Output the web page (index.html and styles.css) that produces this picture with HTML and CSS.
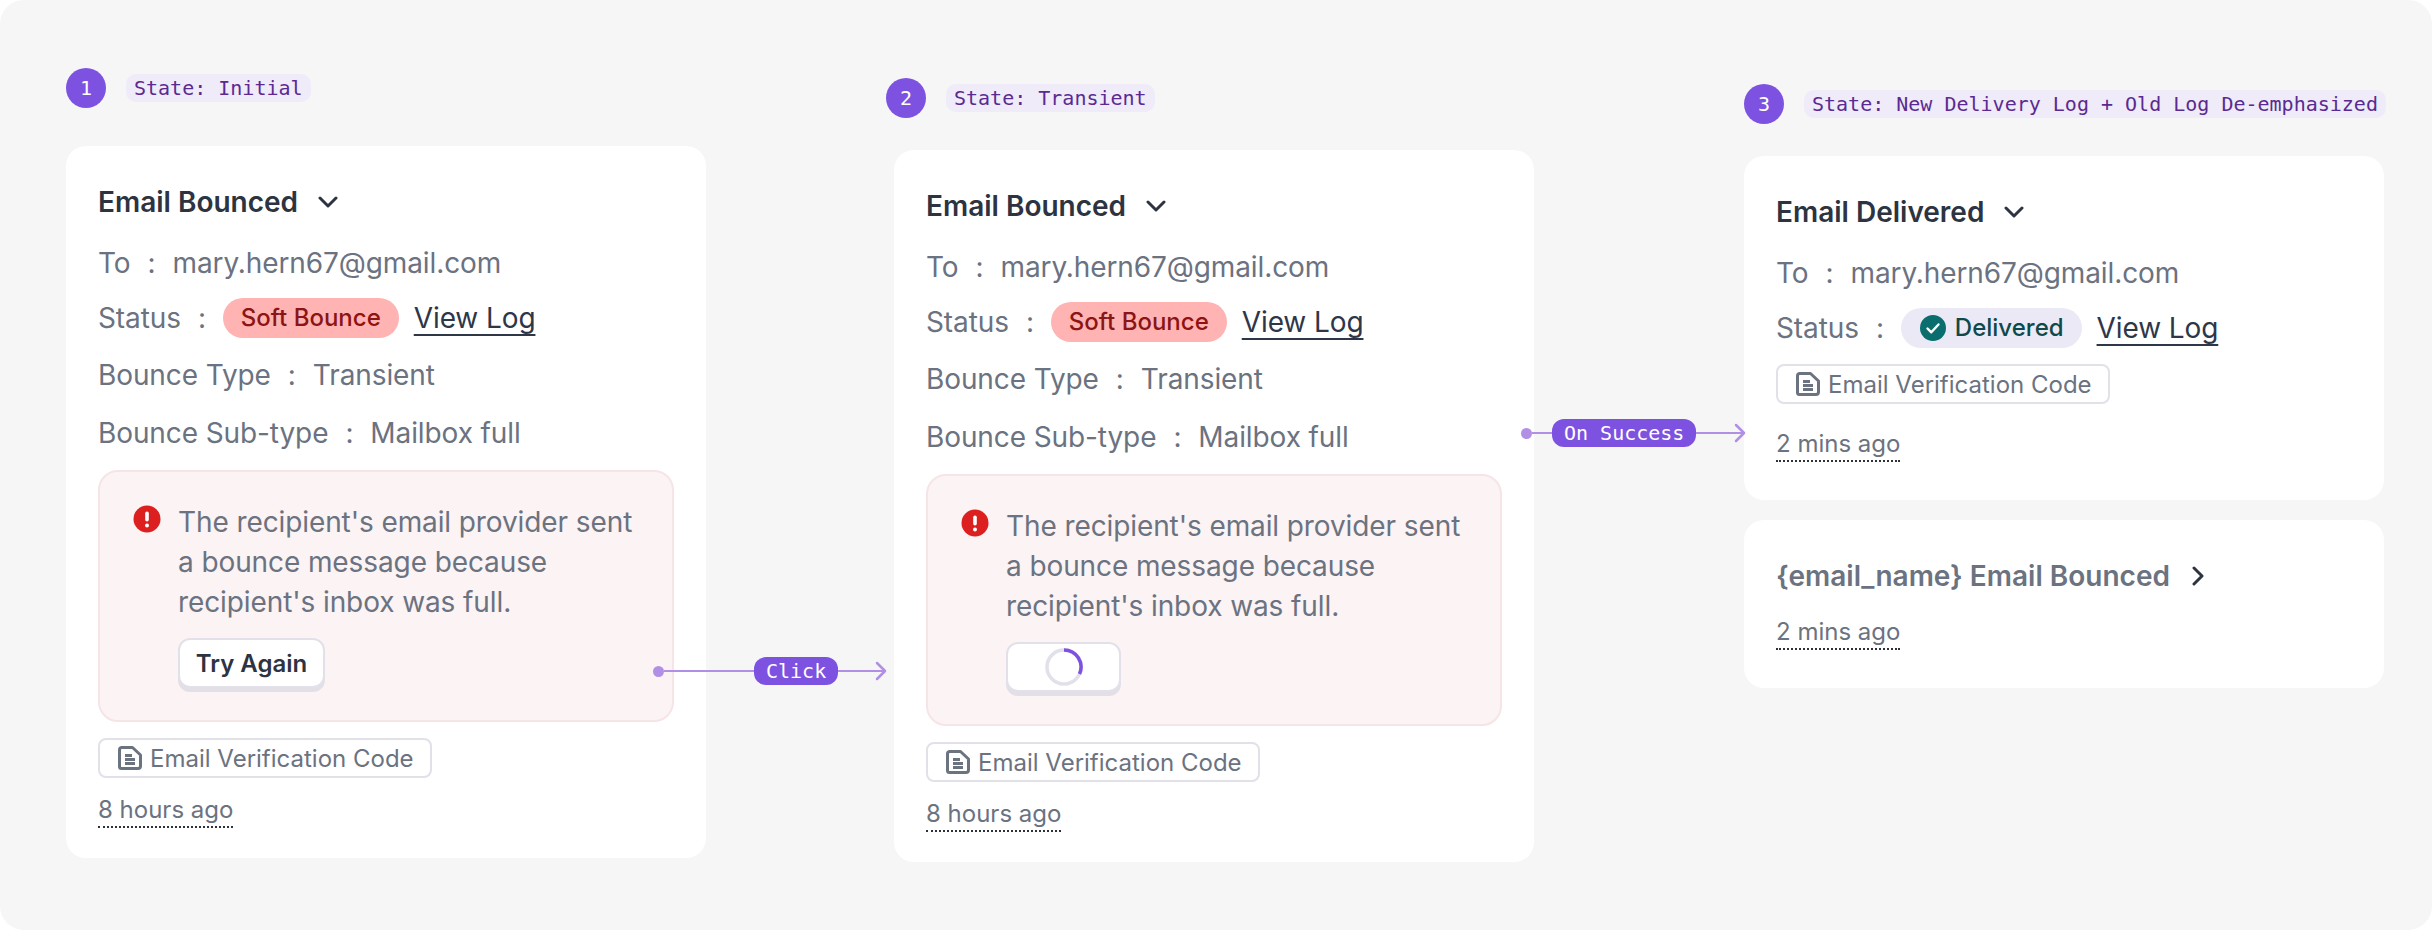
FILE: index.html
```html
<!DOCTYPE html>
<html lang="en">
<head>
    <meta charset="UTF-8">
    <title>Email bounce states</title>
    <link rel="stylesheet" href="styles.css">
</head>
<body>

<div class="canvas">

    <!-- State 1 -->
    <section class="state state-initial">
        <div class="state-head">
            <span class="step">1</span>
            <span class="state-tag">State: Initial</span>
        </div>
        <div class="card card-tall">
            <h3 class="card-title">Email Bounced
                <svg class="chevron" width="20" height="12" viewBox="0 0 20 12"><path d="M2 2l8 8 8-8"/></svg>
            </h3>
            <div class="row"><span>To</span><span>:</span><span>mary.hern67@gmail.com</span></div>
            <div class="row"><span>Status</span><span>:</span><span class="badge badge-red">Soft Bounce</span><a class="log-link">View Log</a></div>
            <div class="row"><span>Bounce Type</span><span>:</span><span>Transient</span></div>
            <div class="row"><span>Bounce Sub-type</span><span>:</span><span>Mailbox full</span></div>
            <div class="alert">
                <svg class="alert-icon" width="28" height="28" viewBox="0 0 28 28"><circle cx="14" cy="14" r="13.5" fill="#dc1f1f"/><rect x="12.2" y="6.5" width="3.6" height="10" rx="1.8" fill="#fff"/><circle cx="14" cy="20.4" r="2" fill="#fff"/></svg>
                <div>
                    <p>The recipient's email provider sent a bounce message because recipient's inbox was full.</p>
                    <button class="btn">Try Again</button>
                </div>
            </div>
            <div class="attachment">
                <svg class="doc" width="24" height="24" viewBox="0 0 24 24"><path d="M3.500 1.500h11l8 7.500v11a2.500 2.500 0 0 1-2.500 2.500h-16.500a2 2 0 0 1-2-2v-16.500a2.500 2.500 0 0 1 2-2.500zM7 9.500h7M7 13.500h10M7 17.500h10"/></svg>
                Email Verification Code
            </div>
            <div class="time-line"><span class="time">8 hours ago</span></div>
        </div>
    </section>

    <!-- State 2 -->
    <section class="state state-transient">
        <div class="state-head">
            <span class="step">2</span>
            <span class="state-tag">State: Transient</span>
        </div>
        <div class="card card-tall">
            <h3 class="card-title">Email Bounced
                <svg class="chevron" width="20" height="12" viewBox="0 0 20 12"><path d="M2 2l8 8 8-8"/></svg>
            </h3>
            <div class="row"><span>To</span><span>:</span><span>mary.hern67@gmail.com</span></div>
            <div class="row"><span>Status</span><span>:</span><span class="badge badge-red">Soft Bounce</span><a class="log-link">View Log</a></div>
            <div class="row"><span>Bounce Type</span><span>:</span><span>Transient</span></div>
            <div class="row"><span>Bounce Sub-type</span><span>:</span><span>Mailbox full</span></div>
            <div class="alert">
                <svg class="alert-icon" width="28" height="28" viewBox="0 0 28 28"><circle cx="14" cy="14" r="13.5" fill="#dc1f1f"/><rect x="12.2" y="6.5" width="3.6" height="10" rx="1.8" fill="#fff"/><circle cx="14" cy="20.4" r="2" fill="#fff"/></svg>
                <div>
                    <p>The recipient's email provider sent a bounce message because recipient's inbox was full.</p>
                    <button class="btn btn-loading">
                        <svg width="38" height="38" viewBox="0 0 38 38"><circle class="spin-track" cx="19" cy="19" r="17"/><path class="spin-arc" d="M19 2a17 17 0 0 1 15.500 24"/></svg>
                    </button>
                </div>
            </div>
            <div class="attachment">
                <svg class="doc" width="24" height="24" viewBox="0 0 24 24"><path d="M3.500 1.500h11l8 7.500v11a2.500 2.500 0 0 1-2.500 2.500h-16.500a2 2 0 0 1-2-2v-16.500a2.500 2.500 0 0 1 2-2.500zM7 9.500h7M7 13.500h10M7 17.500h10"/></svg>
                Email Verification Code
            </div>
            <div class="time-line"><span class="time">8 hours ago</span></div>
        </div>
    </section>

    <!-- State 3 -->
    <section class="state state-delivered">
        <div class="state-head">
            <span class="step">3</span>
            <span class="state-tag">State: New Delivery Log + Old Log De-emphasized</span>
        </div>
        <div class="card">
            <h3 class="card-title">Email Delivered
                <svg class="chevron" width="20" height="12" viewBox="0 0 20 12"><path d="M2 2l8 8 8-8"/></svg>
            </h3>
            <div class="row"><span>To</span><span>:</span><span>mary.hern67@gmail.com</span></div>
            <div class="row"><span>Status</span><span>:</span>
                <span class="badge badge-green">
                    <svg width="26" height="26" viewBox="0 0 26 26"><circle cx="13" cy="13" r="13" fill="#0b6e6e"/><path d="M7.500 13.500l3.800 3.800 7.200-7.800" fill="none" stroke="#fff" stroke-width="2.400" stroke-linecap="round" stroke-linejoin="round"/></svg>
                    Delivered
                </span>
                <a class="log-link">View Log</a>
            </div>
            <div class="attachment attachment-tight">
                <svg class="doc" width="24" height="24" viewBox="0 0 24 24"><path d="M3.500 1.500h11l8 7.500v11a2.500 2.500 0 0 1-2.500 2.500h-16.500a2 2 0 0 1-2-2v-16.500a2.500 2.500 0 0 1 2-2.500zM7 9.500h7M7 13.500h10M7 17.500h10"/></svg>
                Email Verification Code
            </div>
            <div class="time-line time-wrap"><span class="time">2 mins ago</span></div>
        </div>
        <div class="card card-old">
            <h3 class="card-title card-title-muted">{email_name} Email Bounced
                <svg class="chevron-right" width="12" height="20" viewBox="0 0 12 20"><path d="M2 2l8 8-8 8"/></svg>
            </h3>
            <div class="time-line time-old"><span class="time">2 mins ago</span></div>
        </div>
    </section>

    <!-- Стрелки между состояниями -->
    <div class="connector connector-click">
        <span class="dot"></span>
        <span class="line line-a"></span>
        <span class="pill">Click</span>
        <span class="line line-b"></span>
        <svg class="head" width="12" height="20" viewBox="0 0 12 20"><path d="M2 2l8 8-8 8"/></svg>
    </div>
    <div class="connector connector-success">
        <span class="dot"></span>
        <span class="line line-c"></span>
        <span class="pill">On Success</span>
        <span class="line line-d"></span>
        <svg class="head" width="12" height="20" viewBox="0 0 12 20"><path d="M2 2l8 8-8 8"/></svg>
    </div>

</div>

</body>
</html>
```

FILE: styles.css
```css
/* Общие стили */
html, body {
    margin: 0;
    padding: 0;
    background-color: #fff;
}

body {
    font-family: 'Inter', 'Liberation Sans', sans-serif;
    color: #6b7280;
    font-size: 28px;
}

.canvas {
    position: relative;
    box-sizing: border-box;
    width: 2432px;
    height: 930px;
    padding-left: 66px;
    display: flex;
    align-items: flex-start;
    background-color: #f6f6f6;
    border-radius: 24px;
    overflow: hidden;
}

/* Колонки */
.state {
    width: 640px;
    flex: none;
}

.state-initial {
    margin-top: 68px;
}

.state-transient {
    margin-top: 78px;
    margin-left: 188px;
}

.state-delivered {
    margin-top: 84px;
    margin-left: 210px;
}

.state-head {
    display: flex;
    align-items: center;
    gap: 20px;
    height: 40px;
    margin-bottom: 32px;
    white-space: nowrap;
}

.state-initial .state-head {
    margin-bottom: 38px;
}

.state-transient .state-head {
    margin-left: -8px;
}

.step {
    width: 40px;
    height: 40px;
    flex: none;
    border-radius: 50%;
    background-color: #7e52e0;
    color: #fff;
    font-family: 'DejaVu Sans Mono', monospace;
    font-size: 20px;
    line-height: 40px;
    text-align: center;
}

.state-tag {
    padding: 0 8px;
    height: 28px;
    line-height: 28px;
    border-radius: 10px;
    background-color: #efebf9;
    color: #5b2a91;
    font-family: 'DejaVu Sans Mono', monospace;
    font-size: 20px;
}

/* Карточки */
.card {
    box-sizing: border-box;
    background-color: #fff;
    border-radius: 20px;
    padding: 39px 32px 38px;
}

.card-tall {
    padding-bottom: 30px;
}

.card-old {
    margin-top: 20px;
    padding-bottom: 38px;
}

.card-title {
    display: flex;
    align-items: center;
    gap: 19.5px;
    margin: 0 0 24px;
    height: 34px;
    font-size: 28px;
    font-weight: 600;
    color: #2d3340;
}

.card-title-muted {
    color: #6b7280;
    gap: 22px;
    margin-bottom: 23px;
}

.chevron, .chevron-right {
    fill: none;
    stroke: #2d3340;
    stroke-width: 3;
    stroke-linecap: round;
    stroke-linejoin: round;
}

.row {
    display: flex;
    align-items: center;
    gap: 17px;
    height: 40px;
    line-height: 40px;
    margin-bottom: 17px;
    letter-spacing: -0.1px;
    white-space: nowrap;
}

.row:first-of-type {
    margin-bottom: 15px;
}

.row:nth-child(4) {
    margin-bottom: 18px;
}

.badge {
    display: flex;
    align-items: center;
    height: 40px;
    border-radius: 20px;
    font-size: 24px;
    font-weight: 500;
    letter-spacing: 0;
}

.badge-red {
    padding: 0 18px;
    background-color: #ffb3b3;
    color: #8b1414;
}

.badge-green {
    gap: 9px;
    padding: 0 18px 0 19px;
    background-color: #ece9f6;
    color: #0f4a4a;
}

.log-link {
    color: #2d3748;
    margin-left: -2px;
    text-decoration: underline;
    text-decoration-thickness: 2px;
    text-underline-offset: 6px;
}

/* Блок ошибки */
.alert {
    display: flex;
    gap: 17px;
    box-sizing: border-box;
    height: 252px;
    width: 576px;
    padding: 30px 32px 0 33px;
    border: 2px solid #f6e4e7;
    border-radius: 20px;
    background-color: #fcf3f4;
}

.alert-icon {
    flex: none;
    margin-top: 3px;
}

.alert p {
    margin: 0;
    line-height: 40px;
    letter-spacing: -0.1px;
}

.btn {
    display: flex;
    align-items: center;
    justify-content: center;
    box-sizing: border-box;
    width: 147px;
    height: 50px;
    margin-top: 16px;
    padding: 0;
    border: 2px solid #e2e0e9;
    border-radius: 12px;
    background-color: #fff;
    box-shadow: 0 4px 0 #e3dfe6;
    color: #2d3340;
    font-family: inherit;
    font-size: 24px;
    font-weight: 600;
}

.btn-loading {
    width: 115px;
}

.spin-track {
    fill: none;
    stroke: #e2e0e9;
    stroke-width: 3.5;
}

.spin-arc {
    fill: none;
    stroke: #7e52e0;
    stroke-width: 3.5;
}

/* Вложение и время */
.attachment {
    display: inline-flex;
    align-items: center;
    gap: 8px;
    box-sizing: border-box;
    height: 40px;
    margin-top: 16px;
    padding: 0 16px 0 18px;
    border: 2px solid #e2e0e9;
    border-radius: 8px;
    font-size: 24px;
    white-space: nowrap;
}

.attachment-tight {
    margin-top: -1px;
}

.doc {
    fill: none;
    stroke: #6b7280;
    stroke-width: 3;
    stroke-linejoin: round;
}

.time-line {
    display: flex;
}

.time {
    font-size: 24px;
    line-height: 32px;
    border-bottom: 2px dotted #2d3139;
    margin-top: 16px;
}

.time-wrap .time {
    margin-top: 24px;
}

.time-old .time {
    margin-top: 0;
}

/* Стрелки */
.connector {
    position: absolute;
    display: flex;
    align-items: center;
    height: 28px;
}

.connector-click {
    left: 653px;
    top: 657px;
}

.connector-success {
    left: 1521px;
    top: 419px;
}

.dot {
    width: 11px;
    height: 11px;
    border-radius: 50%;
    background-color: #b18fe4;
    flex: none;
}

.line {
    height: 2px;
    background-color: #b18fe4;
    flex: none;
}

.line-a { width: 90px; }
.line-b { width: 47px; }
.line-c { width: 20px; }
.line-d { width: 48px; }

.pill {
    padding: 0 12px;
    height: 28px;
    line-height: 28px;
    border-radius: 12px;
    background-color: #7e52e0;
    color: #fff;
    font-family: 'DejaVu Sans Mono', monospace;
    font-size: 20px;
    white-space: nowrap;
}

.head {
    margin-left: -10px;
    fill: none;
    stroke: #b18fe4;
    stroke-width: 2.500;
    stroke-linecap: round;
    stroke-linejoin: round;
}
```
